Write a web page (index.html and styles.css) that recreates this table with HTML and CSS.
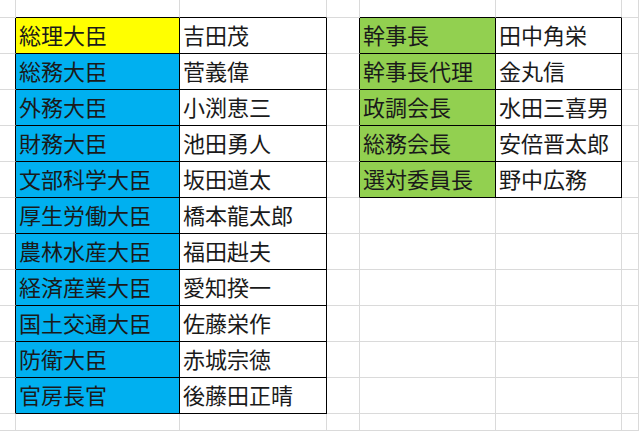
FILE: index.html
```html
<!DOCTYPE html>
<html lang="ja">
<head>
<meta charset="utf-8">
<link rel="stylesheet" href="styles.css">
</head>
<body>
<div class="sheet">
  <!-- row 0 -->
  <div class="c"></div><div class="c bb"></div><div class="c bb"></div><div class="c"></div><div class="c bb"></div><div class="c bb"></div><div class="c"></div>
  <!-- row 1 -->
  <div class="c br"></div><div class="c br bb t yel">総理大臣</div><div class="c br bb t">吉田茂</div><div class="c br"></div><div class="c br bb t grn">幹事長</div><div class="c br bb t">田中角栄</div><div class="c"></div>
  <!-- row 2 -->
  <div class="c br"></div><div class="c br bb t blu">総務大臣</div><div class="c br bb t">菅義偉</div><div class="c br"></div><div class="c br bb t grn">幹事長代理</div><div class="c br bb t">金丸信</div><div class="c"></div>
  <!-- row 3 -->
  <div class="c br"></div><div class="c br bb t blu">外務大臣</div><div class="c br bb t">小渕恵三</div><div class="c br"></div><div class="c br bb t grn">政調会長</div><div class="c br bb t">水田三喜男</div><div class="c"></div>
  <!-- row 4 -->
  <div class="c br"></div><div class="c br bb t blu">財務大臣</div><div class="c br bb t">池田勇人</div><div class="c br"></div><div class="c br bb t grn">総務会長</div><div class="c br bb t">安倍晋太郎</div><div class="c"></div>
  <!-- row 5 -->
  <div class="c br"></div><div class="c br bb t blu">文部科学大臣</div><div class="c br bb t">坂田道太</div><div class="c br"></div><div class="c br bb t grn">選対委員長</div><div class="c br bb t">野中広務</div><div class="c"></div>
  <!-- row 6 -->
  <div class="c br"></div><div class="c br bb t blu">厚生労働大臣</div><div class="c br bb t">橋本龍太郎</div><div class="c"></div><div class="c"></div><div class="c"></div><div class="c"></div>
  <!-- row 7 -->
  <div class="c br"></div><div class="c br bb t blu">農林水産大臣</div><div class="c br bb t">福田赳夫</div><div class="c"></div><div class="c"></div><div class="c"></div><div class="c"></div>
  <!-- row 8 -->
  <div class="c br"></div><div class="c br bb t blu">経済産業大臣</div><div class="c br bb t">愛知揆一</div><div class="c"></div><div class="c"></div><div class="c"></div><div class="c"></div>
  <!-- row 9 -->
  <div class="c br"></div><div class="c br bb t blu">国土交通大臣</div><div class="c br bb t">佐藤栄作</div><div class="c"></div><div class="c"></div><div class="c"></div><div class="c"></div>
  <!-- row 10 -->
  <div class="c br"></div><div class="c br bb t blu">防衛大臣</div><div class="c br bb t">赤城宗徳</div><div class="c"></div><div class="c"></div><div class="c"></div><div class="c"></div>
  <!-- row 11 -->
  <div class="c br"></div><div class="c br bb t blu">官房長官</div><div class="c br bb t">後藤田正晴</div><div class="c"></div><div class="c"></div><div class="c"></div><div class="c"></div>
  <!-- row 12 -->
  <div class="c"></div><div class="c"></div><div class="c"></div><div class="c"></div><div class="c"></div><div class="c"></div><div class="c"></div>
</div>
</body>
</html>
```
FILE: styles.css
```css
html, body {
  margin: 0;
  padding: 0;
  height: 100%;
  background: #fff;
  overflow: hidden;
}
.sheet {
  display: grid;
  grid-template-columns: 16px 164px 147px 33px 136px 126px 1fr;
  grid-template-rows: 18px repeat(11, 36px) 1fr;
  height: 100vh;
  width: 100vw;
  font-family: "Noto Sans CJK JP", "Noto Sans", sans-serif;
  font-size: 22px;
  color: #1a1a1a;
}
.c {
  box-sizing: border-box;
  border-right: 1px solid #dadada;
  border-bottom: 1px solid #dadada;
  min-width: 0;
  overflow: hidden;
}
.br { border-right-color: #000; }
.bb { border-bottom-color: #000; }
.t {
  display: flex;
  align-items: center;
  padding-left: 3px;
  padding-bottom: 4px;
  white-space: nowrap;
  line-height: 1;
}
.yel { background: #ffff00; }
.blu { background: #00b0f0; }
.grn { background: #92d050; }
```
